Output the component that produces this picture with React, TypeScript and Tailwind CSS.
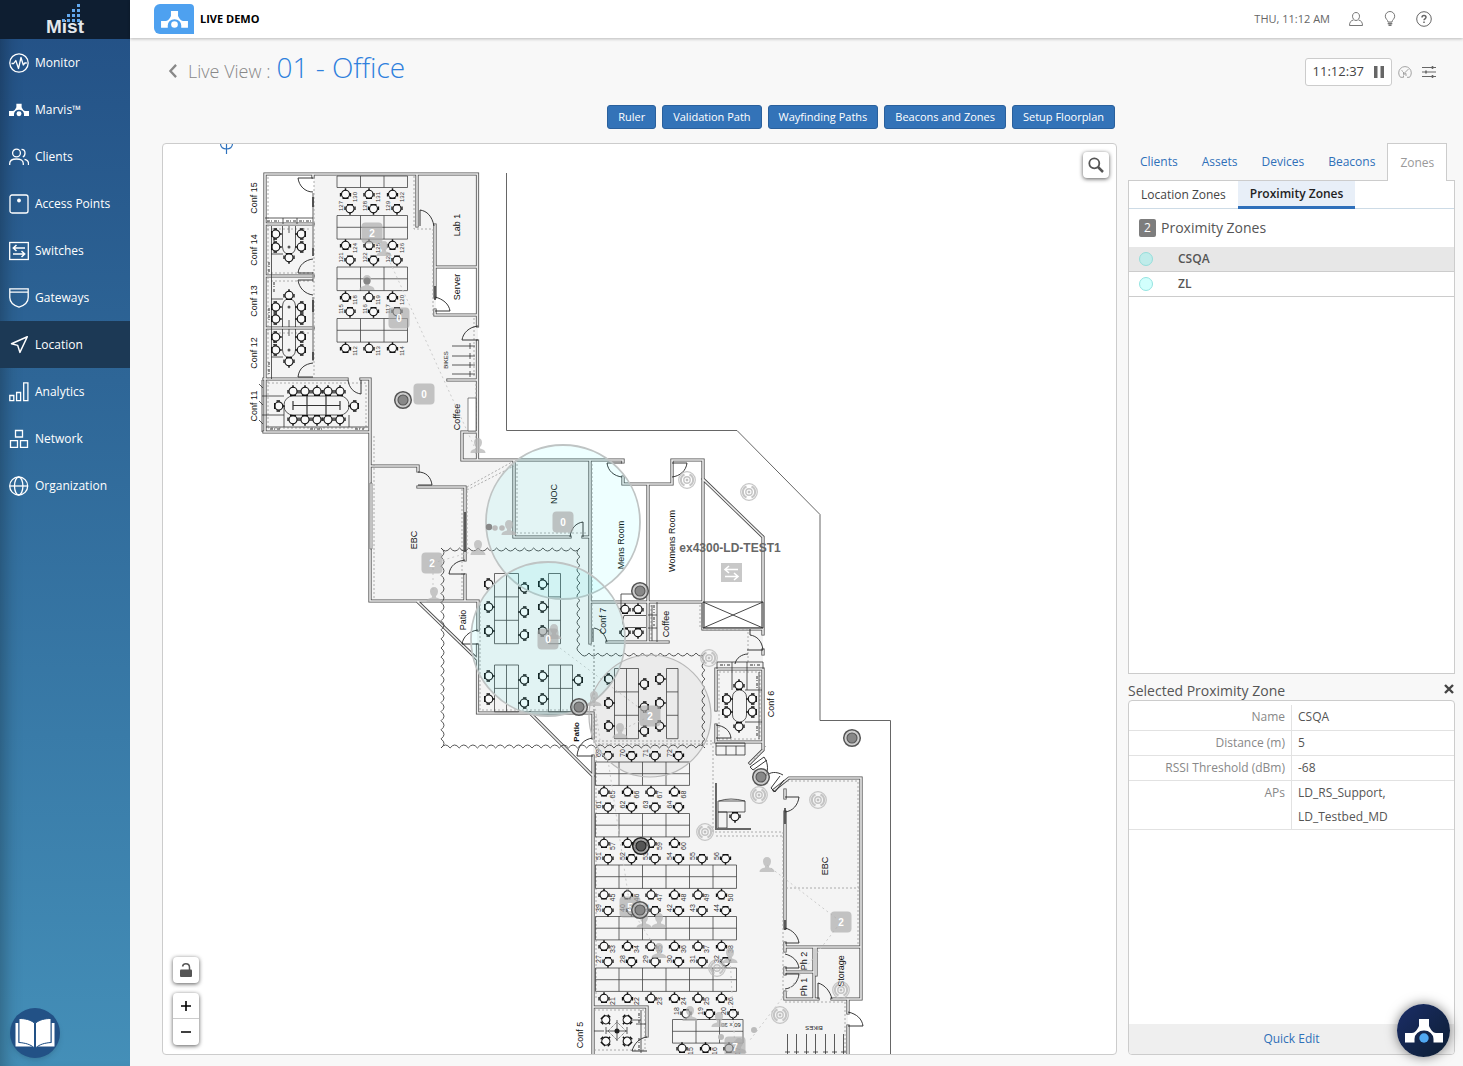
import React from "react";

type Pt = [number, number];

/* ---------- shared glyphs ---------- */

function MarvisShape({ dot = "currentColor", className = "" }: { dot?: string; className?: string }) {
  return (
    <svg viewBox="0 0 38 24" className={className} aria-hidden="true">
      <path
        fill="currentColor"
        d="M14 0h10v7c2 4 4 7 7 7h7v9.5H28.5V20a9.5 8.5 0 0 0-19 0v3.5H0V14h7c3 0 5-3 7-7z"
      />
      <circle cx="19" cy="19" r="4.7" fill={dot} />
    </svg>
  );
}

const stroke = { fill: "none", stroke: "currentColor", strokeWidth: 1.3 } as const;

const navIcons: Record<string, React.ReactNode> = {
  Monitor: (
    <g {...stroke}>
      <circle cx="10" cy="10" r="9.2" />
      <path d="M2.5 10.5h2.2l2.1-3 2.7 8L12 4.5l2.3 7.5 1.5-2h2" strokeLinejoin="round" />
    </g>
  ),
  Clients: (
    <g {...stroke}>
      <circle cx="7.5" cy="6" r="3.9" />
      <path d="M.7 18v-1.500c0-3.300 2.700-4.500 6.800-4.500s6.800 1.200 6.800 4.500V18M12.500 2.300c2 0 3.500 1.500 3.500 3.700s-1 3.500-2.200 4M15.500 12.300c2.800.5 4 2 4 4.200V18" />
    </g>
  ),
  "Access Points": (
    <g {...stroke}>
      <rect x="1" y="1" width="18" height="18" rx="2" />
      <circle cx="10" cy="6.500" r="1.900" fill="currentColor" stroke="none" />
    </g>
  ),
  Switches: (
    <g {...stroke}>
      <rect x=".7" y="1.500" width="18.600" height="17" />
      <path d="M16 7H4.500M7.500 4L4.300 7l3.200 3M4 13h11.500M12.500 10l3.200 3-3.200 3" strokeWidth="1.500" />
    </g>
  ),
  Gateways: (
    <g {...stroke}>
      <path d="M.8.8h18.400v8.700c0 5-4 8-9.200 9.700C4.800 17.500.8 14.500.8 9.500zM.8 4.200h18.400" />
    </g>
  ),
  Location: <path {...stroke} strokeWidth={1.5} d="M18.300 1.700L2.500 8.700l6.200 1.700 2.200 7z" strokeLinejoin="round" />,
  Analytics: (
    <g {...stroke}>
      <path d="M.8 13.500h4v5.200h-4zM7.600 10.500h4v8.200h-4zM14.700.8h4.200v17.900h-4.200z" />
    </g>
  ),
  Network: (
    <g {...stroke}>
      <path d="M6.500 1.500h7v6.500h-7zM1.500 11.700h7v6.700h-7zM11.500 11.700h7v6.700h-7z" />
    </g>
  ),
  Organization: (
    <g {...stroke}>
      <circle cx="9.700" cy="10" r="9" />
      <ellipse cx="9.700" cy="10" rx="4.200" ry="9" />
      <path d="M.7 10h18" />
    </g>
  ),
};

const navItems = [
  "Monitor",
  "Marvis™",
  "Clients",
  "Access Points",
  "Switches",
  "Gateways",
  "Location",
  "Analytics",
  "Network",
  "Organization",
];

function Sidebar() {
  return (
    <nav className="relative flex w-[130px] shrink-0 flex-col bg-linear-to-b from-[#235085] to-[#448fb8] shadow-[inset_18px_0_18px_-14px_rgba(0,0,0,0.3)]">
      <a href="#home" className="flex h-[39px] items-end justify-center bg-[#0e1e31]" aria-label="Mist home">
        <span className="relative flex h-full items-end font-['Liberation_Sans',Arial,sans-serif] text-[19px] leading-6 font-bold text-[#e3e7ec]">
          Mist
          <svg viewBox="0 0 18 18" className="absolute top-1 right-1 h-[18px] w-[18px] fill-[#62a8ee]" aria-hidden="true">
            {[0, 1, 2, 3].map((c) =>
              Array.from({ length: c + 1 }, (_, r) => <rect key={`${c}${r}`} x={c * 5} y={15 - r * 5} width="3" height="3" />)
            )}
          </svg>
        </span>
      </a>
      <ul>
        {navItems.map((n) => (
          <li key={n}>
            <a
              href={`#${n}`}
              className={`flex h-[47px] items-center gap-[6px] pt-px pl-[9px] text-xs font-medium text-white ${
                n === "Location" ? "bg-[#1c3955]" : ""
              }`}
            >
              {n === "Marvis™" ? (
                <MarvisShape className="h-4 w-5 shrink-0" />
              ) : (
                <svg viewBox="0 0 20 20" className="h-5 w-5 shrink-0" aria-hidden="true">
                  {navIcons[n]}
                </svg>
              )}
              {n}
            </a>
          </li>
        ))}
      </ul>
      <button
        aria-label="Documentation"
        className="mt-auto mb-2 ml-[10px] flex h-[50px] w-[50px] items-center justify-center rounded-full bg-[#225186] shadow-md"
      >
        <svg viewBox="0 0 40 32" className="h-8 w-10" aria-hidden="true">
          <path d="M.5 6h3v20c5 0 11 0 15.500 3.500H.500zM39.500 6h-3v20c-5 0-11 0-15.500 3.500h18.500z" fill="#fff" />
          <path d="M4 1.500c6 0 11 1 15.500 4.500v25C15 27 10 26 4 25.500zM36 1.500c-6 0-11 1-15.500 4.500v25C25 27 30 26 36 25.500z" fill="#fff" stroke="#225186" strokeWidth="1" />
        </svg>
      </button>
    </nav>
  );
}

function Header() {
  return (
    <header className="relative flex h-[38px] shrink-0 items-center bg-white pr-[31px] pl-6 shadow-[0_1px_3px_rgba(0,0,0,0.25)]">
      <div className="flex h-[30px] w-10 items-center justify-center rounded-l-md rounded-tr-sm bg-[#4ea1f0] text-white">
        <MarvisShape className="h-[17px] w-[27px]" />
      </div>
      <span className="ml-[6px] text-[11px] font-bold text-black">LIVE DEMO</span>
      <span className="ml-auto text-[11px] text-[#666]">THU, 11:12 AM</span>
      <button aria-label="Account" className="ml-[18px] text-[#777]">
        <svg viewBox="0 0 16 16" className="h-4 w-4" fill="none" stroke="currentColor">
          <path d="M8 1.500c2 0 3.500 1.500 3.500 3.700S10 9.500 8 9.500 4.500 7.400 4.500 5.200 6 1.500 8 1.500zM5.500 9C3 9.500 1.500 11 1.500 14.500h13C14.500 11 13 9.500 10.500 9" />
        </svg>
      </button>
      <button aria-label="What's new" className="ml-[18px] text-[#777]">
        <svg viewBox="0 0 16 16" className="h-4 w-4" fill="none" stroke="currentColor">
          <path d="M6 11C6 9 3.300 8 3.300 5.200a4.700 4.700 0 0 1 9.400 0C12.700 8 10 9 10 11z" />
          <path d="M5.700 12.500h4.600M6.500 14.300h3" strokeWidth="1.500" />
        </svg>
      </button>
      <button aria-label="Help" className="ml-[18px] text-[#666]">
        <svg viewBox="0 0 16 16" className="h-4 w-4" fill="none" stroke="currentColor">
          <circle cx="8" cy="8" r="7.300" />
          <path d="M6 6.500C6 5.200 6.800 4.500 8 4.500s2 .7 2 1.800c0 1.500-2 1.500-2 3M8 10.500V12" strokeWidth="1.500" />
        </svg>
      </button>
    </header>
  );
}

/* ---------- floor plan pieces ---------- */

function Chair({ x, y, r = 0 }: { x: number; y: number; r?: number }) {
  return <use href="#chair" transform={`translate(${x} ${y}) rotate(${r})`} />;
}

function Desk({ x, y, cols, rows, w, h }: { x: number; y: number; cols: number; rows: number; w: number; h: number }) {
  let d = "";
  for (let i = 0; i <= cols; i++) d += `M${x + i * w} ${y}v${rows * h}`;
  for (let j = 0; j <= rows; j++) d += `M${x} ${y + j * h}h${cols * w}`;
  return <path d={d} stroke="#444" strokeWidth="0.8" fill="none" />;
}

function Seat({ x, y, n }: { x: number; y: number; n: number }) {
  return (
    <text fontSize={n > 99 ? 6 : 7} fill="#333" textAnchor="middle" transform={`translate(${x} ${y}) rotate(-90)`}>
      {n}
    </text>
  );
}

function SeatRow({ x, y, count, from, above }: { x: number; y: number; count: number; from: number; above?: boolean }) {
  return (
    <>
      {Array.from({ length: count }, (_, i) => (
        <g key={i}>
          <Chair x={x + i * 23.5} y={y} r={above ? 180 : 0} />
          <Seat x={x + i * 23.5 + (above ? -7 : 11)} y={above ? y - 3 : y + 3} n={from + i} />
        </g>
      ))}
    </>
  );
}

function scallop(points: Pt[]) {
  let d = `M${points[0][0]} ${points[0][1]}`;
  for (let i = 1; i < points.length; i++) {
    const [ax, ay] = points[i - 1];
    const [bx, by] = points[i];
    const len = Math.hypot(bx - ax, by - ay);
    const n = Math.max(1, Math.round(len / 9));
    const dx = (bx - ax) / n;
    const dy = (by - ay) / n;
    const ux = (bx - ax) / len;
    const uy = (by - ay) / len;
    for (let k = 0; k < n; k++) d += `q${dx / 2 - uy * 6} ${dy / 2 + ux * 6} ${dx} ${dy}`;
  }
  return d;
}

const floor =
  "M265 225H314V175H478V460H590V602H703V629H763V742V752L750 764L776 790L788 778H861V1000H848V1060H593V713H477V601H370V431H265Z";

const walls =
  "M265 432V174H477.500V326M477.500 341V460M462 432V460H623V462M462 432H477M265 224H313M265 276H313M265 328H313M264 379H347M361 379H370V466M264 432H370" +
  "M313 174V177M417 174V226M435 225V297M435 310V315H477M435 267H477M448 380H477" +
  "M370 431V601H478V630M370 466H418V471M418 487H465V560M465 575V601M477.500 645V713H593V738M593 756V1060" +
  "M514 461V537H570M583 537H590M590 460V643M648 484V642M590 602H703M623 477V484H672V460H703V629H763V634M703 479L763 537V629" +
  "M607 642H668M418 602L477 659M530 713L593 776M763 650V654M716 669H763V742H716V725M716 710V669M763 742V750L750 763" +
  "M774 790L789 778H861V947M785 790V798M785 812V928M785 943V951M785 947H861V999H832M785 968V974M785 972H814M814 947V998M816 947V975M818 999H785V992M848 999V1013M848 1026V1060" +
  "M593 1007H647V1036";

/* partitions drawn as one grey line */
const partitions = "M313 193V248M313 272V282M313 297V361";

const dashes =
  "M314 177V378M414 176V229H433V315M474 318V378M476 384V456M268 383H366V428H268M268 177V428M374 436V598M462 489V598M467 487L512 462M467 490L514 466M467 487V548M517 464V533H588M592 464V640M594 645V745M590 645H594V713M702 630H748V662M598 744H714M598 741H714M713 742V832H783V1000M716 836H783M786 888H859M787 781H858V944M766 746L753 760M480 604V710H590M596 716V1000M845 1002V1055M594 1010H645V1050H594M719 672H760V739H719ZM785 1002H845M651 605V640M700 605V628M267 229H311M267 273H311M267 281H311M267 333H311";

const doors =
  "M313 178H298C299 186 305 192 313 192M313 259C305 260 299 265 298 273H313M313 280H298C299 288 305 294 313 295M313 363C305 364 299 368 298 377H313" +
  "M361 380V394C354 393 349 388 348 380M420 226V210C427 211 432 216 434 226M435 297C443 299 449 304 450 311H435M478 326C469 327 463 333 462 340H478" +
  "M418 472C426 472 431 477 432 485H418M465 560C456 561 450 566 449 574H465M478 630C469 631 463 637 462 644H478M583 537V522C576 523 571 528 570 537" +
  "M607 463H622M607 463C608 471 614 476 622 477M672 463H687C686 471 680 476 672 477M593 628V642M594 628C600 629 605 634 607 642M750 629V635C757 636 762 641 763 650H747M735 664C736 658 742 654 748 654" +
  "M716 725C724 726 730 730 731 738H716M785 797H799C798 805 793 811 785 812M785 928C793 930 798 936 799 943H785M785 954C793 956 798 961 799 968H785M785 974H799C798 982 793 988 785 989" +
  "M818 999V983C825 985 830 991 832 999M848 1012C857 1014 862 1019 863 1026H848M593 738C584 739 578 745 577 756H593M632 1051C634 1044 639 1038 647 1037M632 1051H647M764 757L750 767L753 770L767 760M764 757C769 764 768 772 765 777M780 776L771 788L775 792L784 780M783 775C776 771 770 772 766 776";

const rooms: [string, number, number][] = [
  ["Conf 15", 257, 198],
  ["Conf 14", 257, 250],
  ["Conf 13", 257, 301],
  ["Conf 12", 257, 353],
  ["Conf 11", 257, 406],
  ["Lab 1", 460, 225],
  ["Server", 460, 287],
  ["Coffee", 460, 417],
  ["EBC", 417, 540],
  ["NOC", 557, 494],
  ["Mens Room", 624, 545],
  ["Womens Room", 675, 541],
  ["Patio", 466, 620],
  ["Conf 7", 606, 621],
  ["Coffee", 669, 624],
  ["Conf 6", 774, 704],
  ["EBC", 828, 866],
  ["Ph 2", 807, 961],
  ["Ph 1", 807, 987],
  ["Storage", 844, 971],
  ["Conf 5", 583, 1035],
];

const tableChairs: [number, number, number][] = [
  [276, 234, 270], [276, 247, 270], [301, 234, 90], [301, 247, 90], [289, 258, 0],
  [289, 295, 180], [276, 307, 270], [276, 319, 270], [301, 307, 90], [301, 319, 90],
  [276, 337, 270], [276, 350, 270], [301, 337, 90], [301, 350, 90], [289, 362, 0],
  [279, 406, 270], [354, 406, 90],
  ...[293, 305, 317, 328, 340].flatMap((x): [number, number, number][] => [[x, 391, 180], [x, 420, 0]]),
  [739, 685, 180], [727, 699, 270], [727, 712, 270], [752, 699, 90], [752, 712, 90], [739, 727, 0],
  [625, 609, 180], [638, 609, 180], [625, 633, 0], [638, 633, 0],
  [606, 1020, 315], [627, 1020, 45], [606, 1041, 225], [627, 1041, 135], [735, 817, 0],
];

const leftSeats: Pt[] = [
  ...[489, 543].flatMap((x) => [584, 607, 631, 676, 699].map((y): Pt => [x, y])),
  ...[609, 660].flatMap((x) => [679, 703, 726].map((y): Pt => [x, y])),
];
const rightSeats: Pt[] = [
  ...[588, 612, 635, 680, 703].map((y): Pt => [524, y]),
  [578, 680],
  ...[684, 707, 731].map((y): Pt => [644, y]),
];

const accessPoints: [number, number, boolean?][] = [
  [403, 400], [640, 591], [579, 707], [852, 738], [761, 777], [641, 846, true], [640, 910],
];
const beacons: Pt[] = [
  [687, 480], [749, 492], [709, 658], [759, 795], [818, 800], [705, 832], [717, 968], [841, 990], [780, 1015],
];
const people: Pt[] = [
  [367, 283], [384, 249], [478, 446], [478, 548], [509, 528], [434, 595], [594, 699], [620, 731], [767, 865],
  [644, 921], [659, 921], [659, 951], [730, 956], [690, 1014], [719, 1020], [554, 632], [739, 1046],
];
const badges: [number, number, string][] = [
  [372, 233, "2"], [399, 318, "0"], [424, 394, "0"], [563, 522, "0"], [432, 563, "2"],
  [548, 639, "0"], [650, 716, "2"], [841, 922, "2"], [630, 907, "5"], [735, 1047, "7"],
];

function FloorPlan() {
  return (
    <svg
      viewBox="163 144 953 911"
      preserveAspectRatio="xMinYMin slice"
      className="absolute inset-0 h-full w-full font-['Liberation_Sans',Arial,sans-serif]"
      role="img"
      aria-label="Office floor plan"
    >
      <defs>
        <g id="chair">
          <circle cy="0.2" r="4" fill="#fafafa" stroke="#111" strokeWidth="1.100" />
          <path d="M-5-1V2.500M5-1V2.500M-3 4.300H3" stroke="#111" strokeWidth="1.300" />
          <path d="M0-3.500V-5.800" stroke="#111" strokeWidth="1.500" />
        </g>
        <g id="person" fill="#b5b5b5" fillOpacity="0.75">
          <path d="M0-8c2.500 0 4 1.700 4 4.200C4-1.500 3 0 2 1v1.500C5 3.500 7.500 4 7.500 7h-15C-7.500 4-5 3.500-2 2.500V1C-3 0-4-1.500-4-3.800-4-6.300-2.500-8 0-8z" />
        </g>
        <g id="beacon" fill="none" stroke="#bbb" strokeOpacity="0.85">
          <circle r="8.300" strokeWidth="1.200" />
          <path d="M-2.500 5.500A6 6 0 0 1-2.500-5.500M2.500-5.500A6 6 0 0 1 2.500 5.500" strokeWidth="2" />
          <circle r="3.200" strokeWidth="1.400" />
          <circle r="1" fill="#bbb" />
        </g>
      </defs>

      <path d="M226.500 144V154M220.500 144Q221 149 226.500 149T232.500 144" stroke="#2f72bd" fill="none" strokeWidth="1.200" />
      <path d={floor} fill="#f4f4f4" />
      <path d="M436 268H477V314H436Z" fill="#fff" />
      <path d="M506.500 173V430.500H737L820 514.500V720.500H890.500V1060" fill="none" stroke="#555" strokeWidth="0.900" />

      <path d={walls} fill="none" stroke="#4a4a4a" strokeWidth="3.200" strokeLinecap="square" />
      <path d={walls} fill="none" stroke="#eee" strokeWidth="1.600" strokeLinecap="square" />
      <path d={partitions} fill="none" stroke="#999" strokeWidth="1.600" />
      <path d={dashes} fill="none" stroke="#999" strokeWidth="0.800" strokeDasharray="2 2" />
      <path d={doors} fill="none" stroke="#222" strokeWidth="0.900" />
      <path d="M703 602H763V628H703ZL763 628M763 602L703 628" fill="none" stroke="#333" strokeWidth="0.900" />
      <path d="M370 483V549H372V483ZM468 398H476V431H468Z" fill="#fff" stroke="#555" strokeWidth="0.700" />

      <g fill="none" stroke="#333" strokeWidth="0.800">
        <path d="M282.500 226V247Q283 254 289 254T295.500 247V226M282.500 327V306Q283 299 289 299T295.500 306V327M282.500 329V350Q283 357 289 357T295.500 350V329" />
        <path d="M271.500 226V379M265 218H313M283 218V224M297 218V224M271 254H283M271 299H283M271 357H283M289 226V233M289 320V327M289 329V336" />
        <rect x="284" y="396" width="65" height="19" rx="9" />
        <path d="M262 396H284M262 415H284M284 406V427M349 415V427M266 427H368" />
        <path d="M293 405.500H340M293 401V410M307 396V415M326 396V415M340 401V410" strokeWidth="1.200" />
        <path d="M262 380V432M259 384L263 388M259 401L263 405M259 420L263 424" />
        <rect x="732.500" y="690" width="14" height="32" rx="7" />
        <path d="M717 662H763V669M732 662V690M747 662V690M717 662V669M759 672V739M745 690H762M745 722H762" />
        <path d="M646 615.500H624Q621 621 624 627.500H646M621 594V610M621 594H634M652 605V641M657 602V642M648 615H657M648 628H657" />
        <path d="M452 346H475M452 356H475M452 365H475M452 374H475M470 343V349M470 353V359M470 362V368M470 371V377" />
        <path d="M716 743H745V755H716ZM716 746H745M726 746V755M736 746V755M718 801H745V812H718ZM718 812H727V828H718ZM719 801Q730 797 745 801" />
        <path d="M606 1031H627M617 1020V1041M606 1027V1034M627 1027V1034M594 1031H604M641 1010V1053M627 1020H641M636 1024H646" />
        <path d="M608 1031L617 1022L626 1031L617 1040Z" strokeDasharray="1 1" />
        <path d="M787.500 1034V1055M796.500 1034V1055M806.500 1034V1055M815.500 1034V1055M825.500 1034V1055M834.500 1034V1055M843.500 1034V1055M785 1052H790M794 1052H799M804 1052H809M813 1052H818M823 1052H828M832 1052H837M841 1052H846" />
      </g>
      <path d="M716 783V829H751" fill="none" stroke="#666" strokeWidth="2" />
      <g stroke="#333" strokeWidth="1" strokeDasharray="3 1 1 2" fill="none">
        <path d="M267 221H280M286 221H296M299 221H311M274 231V250M269 262V272M274 282V292M269 308V320M274 333V347M269 362V374M270 429H280M310 429H323M355 429H364M720 665H730M750 665H760M757 676V688M757 726V736M654 605V613M654 617V626M639 1013V1024M639 1038V1050" />
      </g>
      <path d="M313 197V207M313 248V256M313 300V312M313 352V360M435 286V300M465 512V552M785 808V824M785 920V930" stroke="#333" strokeWidth="1.500" />
      <circle cx="617" cy="1031" r="2.500" fill="#222" />
      <circle cx="289" cy="247" r="1.500" fill="#555" />
      <circle cx="289" cy="307" r="1.500" fill="#555" />
      <circle cx="289" cy="350" r="1.500" fill="#555" />

      <Desk x={337} y={176} cols={3} rows={1} w={23.5} h={11.5} />
      {[215.5, 267, 318.5].map((y) => (
        <Desk key={y} x={337} y={y} cols={3} rows={2} w={23.5} h={11.8} />
      ))}
      <SeatRow x={345.5} y={194} count={3} from={130} />
      <SeatRow x={350} y={209} count={3} from={127} above />
      <SeatRow x={345.5} y={245} count={3} from={124} />
      <SeatRow x={350} y={260.5} count={3} from={121} above />
      <SeatRow x={345.5} y={297} count={3} from={118} />
      <SeatRow x={350} y={312} count={3} from={115} above />
      <SeatRow x={345.5} y={348} count={3} from={112} />

      {[762, 813.5].map((y) => (
        <Desk key={y} x={595.5} y={y} cols={4} rows={2} w={23.5} h={11.7} />
      ))}
      {[865, 916.5, 968].map((y) => (
        <Desk key={y} x={595.5} y={y} cols={6} rows={2} w={23.5} h={11.7} />
      ))}
      <SeatRow x={608} y={756} count={4} from={69} above />
      <SeatRow x={604} y={791.5} count={4} from={65} />
      <SeatRow x={608} y={807.5} count={4} from={61} above />
      <SeatRow x={604} y={843} count={4} from={57} />
      <SeatRow x={608} y={859} count={6} from={51} above />
      <SeatRow x={604} y={894.5} count={6} from={45} />
      <SeatRow x={608} y={911} count={6} from={39} above />
      <SeatRow x={604} y={946} count={6} from={33} />
      <SeatRow x={608} y={962} count={6} from={27} above />
      <SeatRow x={604} y={998} count={6} from={21} />
      <Desk x={672.5} y={1019.5} cols={3} rows={2} w={23.5} h={11.8} />
      <SeatRow x={686} y={1014} count={3} from={18} above />
      <SeatRow x={682} y={1048} count={3} from={15} />

      <Desk x={494.5} y={573.5} cols={2} rows={3} w={12} h={23.4} />
      <Desk x={548.5} y={573.5} cols={1} rows={3} w={12} h={23.4} />
      <Desk x={494.5} y={665} cols={2} rows={2} w={12} h={23.4} />
      <Desk x={548.5} y={665} cols={2} rows={2} w={12} h={23.4} />
      <Desk x={614.5} y={668.5} cols={2} rows={3} w={12} h={23.4} />
      <Desk x={666.5} y={668.5} cols={1} rows={3} w={11.5} h={23.4} />
      {leftSeats.map(([x, y]) => (
        <Chair key={`l${x}-${y}`} x={x} y={y} r={90} />
      ))}
      {rightSeats.map(([x, y]) => (
        <Chair key={`r${x}-${y}`} x={x} y={y} r={270} />
      ))}
      {tableChairs.map(([x, y, r]) => (
        <Chair key={`t${x}-${y}`} x={x} y={y} r={r + 180} />
      ))}

      <path
        d={scallop([[441, 548], [580, 548], [580, 653], [705, 653], [705, 748], [441, 748], [441, 548]])}
        fill="none"
        stroke="#444"
        strokeWidth="0.900"
      />

      {rooms.map(([label, x, y]) => (
        <text key={`${label}${y}`} fontSize="9" fill="#111" textAnchor="middle" transform={`translate(${x} ${y}) rotate(-90)`}>
          {label}
        </text>
      ))}
      <text fontSize="8" fontWeight="700" fill="#111" textAnchor="middle" transform="translate(579 732) rotate(-90)">
        Patio
      </text>
      <text fontSize="6" fill="#222" textAnchor="middle" transform="translate(448 360) rotate(-90)">
        BIKES
      </text>
      <text fontSize="6" fill="#222" textAnchor="middle" transform="translate(814 1026) rotate(180)">
        BIKES
      </text>
      <text fontSize="6" fill="#222" textAnchor="middle" transform="translate(731 1023) rotate(180)">
        60 x 30
      </text>

      <path
        d="M384 249L474 446M433 563L478 550M433 563V590M560 648L650 716M594 699L600 740M620 731L650 716M767 865L841 922L750 1040M608 760L630 907L660 955M730 956L735 1050"
        fill="none"
        stroke="#ccc"
        strokeDasharray="2 3"
      />

      <circle cx="563" cy="522" r="77" fill="#00ffff" fillOpacity="0.065" stroke="#bfc4c4" strokeWidth="1.800" />
      <circle cx="548" cy="639" r="77" fill="#00f0f0" fillOpacity="0.075" stroke="#bfc4c4" strokeWidth="1.800" />
      <circle cx="650" cy="716" r="61" fill="#000" fillOpacity="0.035" stroke="#b8b8b8" strokeWidth="1.200" />

      {beacons.map(([x, y]) => (
        <use key={`${x}-${y}`} href="#beacon" x={x} y={y} />
      ))}
      {people.map(([x, y]) => (
        <use key={`${x}-${y}`} href="#person" x={x} y={y} />
      ))}
      <g fill="#888">
        <circle cx="367" cy="281" r="3.500" />
        <circle cx="489" cy="527" r="3.200" />
        <g fill="#bbb">
          <circle cx="495" cy="528" r="2.800" />
          <circle cx="502" cy="528" r="2.800" />
          <circle cx="754" cy="1030" r="3" />
          <circle cx="721" cy="1037" r="3" />
        </g>
      </g>
      {badges.map(([x, y, n]) => (
        <g key={`${x}-${y}`}>
          <rect x={x - 10.5} y={y - 10.5} width="21" height="21" rx="4" fill="#a8a8a8" fillOpacity="0.650" />
          <text x={x} y={y + 4} fontSize="10" fontWeight="700" fill="#fff" textAnchor="middle">
            {n}
          </text>
        </g>
      ))}
      {accessPoints.map(([x, y, dark]) => (
        <g key={`${x}-${y}`} stroke={dark ? "#222" : "#555"}>
          <circle cx={x} cy={y} r="8.300" fill={dark ? "#888" : "#bbb"} fillOpacity="0.700" strokeWidth="1.500" />
          <circle cx={x} cy={y} r="5" fill={dark ? "#555" : "#888"} strokeWidth="1.100" />
        </g>
      ))}
      <rect x="721" y="563" width="21" height="19" fill="#c8c8c8" />
      <path d="M738 569.500H726M729 566L725 569.500L729 573M725 576.500H737M734 573L738 576.500L734 580" fill="none" stroke="#fff" strokeWidth="1.600" />
      <text x="730" y="552" fontSize="12" fontWeight="700" fill="#666" textAnchor="middle">
        ex4300-LD-TEST1
      </text>
    </svg>
  );
}

const mapButton =
  "flex h-[26px] w-[26px] items-center justify-center rounded bg-white text-[#555] shadow-[0_1px_4px_rgba(0,0,0,0.65)]";

function MapCard() {
  return (
    <section className="relative min-h-[600px] flex-1 overflow-hidden rounded-sm border border-[#ccc] bg-white">
      <FloorPlan />
      <button aria-label="Search map" className={`absolute top-2 right-[7px] ${mapButton}`}>
        <svg viewBox="0 0 16 16" className="h-4 w-4" fill="none" stroke="currentColor">
          <circle cx="6.300" cy="6.300" r="5" strokeWidth="1.800" />
          <path d="M10 10L15 15" strokeWidth="2.500" />
        </svg>
      </button>
      <div className="absolute bottom-[9px] left-[10px] flex flex-col gap-[10px]">
        <button aria-label="Unlock map" className={mapButton}>
          <svg viewBox="0 0 14 16" className="h-4 w-[14px]" fill="currentColor">
            <rect x="1" y="7.500" width="12" height="7.500" rx="1" />
            <path d="M3.500 4.500C4 2.500 5 1.800 6.800 1.800c2.200 0 3.700 1.500 3.700 3.700v2.500" fill="none" stroke="currentColor" strokeWidth="1.500" />
          </svg>
        </button>
        <div className="flex w-[26px] flex-col divide-y divide-[#ccc] rounded bg-white text-black shadow-[0_1px_4px_rgba(0,0,0,0.65)]">
          {["Zoom in", "Zoom out"].map((z, i) => (
            <button key={z} aria-label={z} className="flex h-[26px] items-center justify-center">
              <svg viewBox="0 0 12 12" className="h-3 w-3" stroke="currentColor" strokeWidth="1.600">
                <path d={i ? "M1 6H11" : "M1 6H11M6 1V11"} />
              </svg>
            </button>
          ))}
        </div>
      </div>
    </section>
  );
}

const details = [
  ["Name", "CSQA"],
  ["Distance (m)", "5"],
  ["RSSI Threshold (dBm)", "-68"],
];

function SidePanel() {
  return (
    <aside className="flex w-[327px] shrink-0 flex-col text-xs">
      <div role="tablist" className="flex h-[37px] items-stretch text-[#2f70b8]">
        {["Clients", "Assets", "Devices", "Beacons"].map((t) => (
          <button key={t} role="tab" className="px-3">
            {t}
          </button>
        ))}
        <button
          role="tab"
          aria-selected="true"
          className="relative -mb-px ml-auto mr-2 border border-b-0 border-[#ccc] bg-white px-3 text-[#999]"
        >
          Zones
        </button>
      </div>
      <div className="flex-1 border border-[#ccc] bg-white">
        <div role="tablist" className="flex h-7 border-b border-[#cddbe6]">
          <button role="tab" className="px-3 text-[#444]">
            Location Zones
          </button>
          <button role="tab" aria-selected="true" className="-mb-px border-b-3 border-[#2f70bb] bg-[#e8eff8] px-3 font-semibold text-[#222]">
            Proximity Zones
          </button>
        </div>
        <h2 className="flex h-[38px] items-center gap-[5px] pl-[10px] text-sm text-[#555]">
          <span className="flex h-[18px] w-[17px] items-center justify-center rounded-xs bg-[#7d7d7d] text-xs text-white">2</span>
          Proximity Zones
        </h2>
        <ul className="font-semibold text-[#555]">
          <li className="flex h-[25px] items-center gap-[25px] border-b border-[#ccc] bg-[#e7e7e7] pl-[10px]">
            <span className="h-[14px] w-[14px] rounded-full border border-[#95dedb] bg-[#bfecea]" />
            CSQA
          </li>
          <li className="flex h-[25px] items-center gap-[25px] border-b border-[#ccc] pl-[10px]">
            <span className="h-[14px] w-[14px] rounded-full border border-[#95e4e1] bg-[#d2fffd]" />
            ZL
          </li>
        </ul>
      </div>
      <div className="flex h-[26px] items-end justify-between text-[#555]">
        <h2 className="text-sm leading-[18px]">Selected Proximity Zone</h2>
        <button aria-label="Close" className="mb-[6px]">
          <svg viewBox="0 0 10 10" className="mr-px h-[10px] w-[10px]" stroke="#444" strokeWidth="2.400">
            <path d="M1 1L9 9M9 1L1 9" />
          </svg>
        </button>
      </div>
      <div className="flex h-[355px] flex-col overflow-hidden rounded-sm border border-[#ccc] bg-white pt-1">
        <table className="w-full border-collapse text-[#555]">
          <tbody>
            {details.map(([k, v]) => (
              <tr key={k} className="h-[25px] border-b border-[#e2e2e2]">
                <th scope="row" className="w-1/2 border-r border-[#e2e2e2] pr-[6px] text-right font-normal text-[#888]">
                  {k}
                </th>
                <td className="pl-[6px]">{v}</td>
              </tr>
            ))}
            <tr className="border-b border-[#e2e2e2] align-top leading-6">
              <th scope="row" className="border-r border-[#e2e2e2] pr-[6px] text-right font-normal text-[#888]">
                APs
              </th>
              <td className="pl-[6px]">
                LD_RS_Support,
                <br />
                LD_Testbed_MD
              </td>
            </tr>
          </tbody>
        </table>
        <button className="mt-auto h-[30px] bg-[#efefef] text-[#2f70b8]">Quick Edit</button>
      </div>
    </aside>
  );
}

export default function App() {
  return (
    <div className="flex min-h-screen bg-[#f8f8f8] font-['Open_Sans','Noto_Sans',sans-serif]">
      <Sidebar />
      <div className="flex min-w-0 flex-1 flex-col">
        <Header />
        <main className="flex flex-1 flex-col pr-2 pb-[11px] pl-8">
          <div className="flex h-[67px] items-center">
            <h1 className="flex items-baseline gap-[6px] pb-[10px] font-light">
              <a href="#back" aria-label="Back" className="mr-1 ml-[6px]">
                <svg viewBox="0 0 10 16" className="h-[14px] w-[10px]" fill="none" stroke="#888" strokeWidth="2.600">
                  <path d="M8.500 1L2 8L8.500 15" />
                </svg>
              </a>
              <span className="text-lg text-[#888]">Live View :</span>
              <span className="text-[28px] leading-10 text-[#2f80dd]">01 - Office</span>
            </h1>
            <div className="ml-auto flex items-center gap-[6px] pr-[19px]">
              <button className="flex h-7 items-center gap-[10px] rounded-[3px] border border-[#ccc] bg-white px-[7px] text-[13px] text-[#444]">
                11:12:37
                <svg viewBox="0 0 10 12" className="h-3 w-[10px]" fill="#666" aria-label="Pause">
                  <path d="M0 0H3.500V12H0zM6.500 0H10V12H6.500z" />
                </svg>
              </button>
              <button aria-label="Performance" className="text-[#999]">
                <svg viewBox="0 0 14 14" className="h-[14px] w-[14px]" fill="none" stroke="currentColor">
                  <path
                    d="M2.500 12.300A6.300 6.300 0 1 1 11.500 12.300M2.500 12.300H5.500V10.500M11.500 12.300H9M5.500 9L10.500 4M5.500 7V9.500L8 8.500V11M3.500 5.500L5 6.500"
                    strokeWidth=".9"
                  />
                </svg>
              </button>
              <button aria-label="Display settings" className="ml-1 text-[#666]">
                <svg viewBox="0 0 14 12" className="h-3 w-[14px]" fill="none" stroke="currentColor">
                  <path d="M0 1.500H14M0 6H14M0 10.500H14" />
                  <path d="M10.500 0V3M4 4.500V7.500M10.500 9V12" strokeWidth="1.600" />
                </svg>
              </button>
            </div>
          </div>
          <div className="flex flex-1 gap-[11px]">
            <div className="flex min-w-0 flex-1 flex-col">
              <div className="flex h-[38px] items-start justify-end gap-[6px] pr-[2px]">
                {["Ruler", "Validation Path", "Wayfinding Paths", "Beacons and Zones", "Setup Floorplan"].map((b) => (
                  <button
                    key={b}
                    className="h-6 rounded-[3px] border border-[#2a609c] bg-[#3373b8] px-[10px] text-[11px] font-medium text-white"
                  >
                    {b}
                  </button>
                ))}
              </div>
              <MapCard />
            </div>
            <div className="flex flex-col pt-[38px]">
              <div className="flex flex-1">
                <SidePanel />
              </div>
            </div>
          </div>
        </main>
      </div>
      <button
        aria-label="Marvis assistant"
        className="fixed right-[13px] bottom-[9px] flex h-[53px] w-[53px] items-center justify-center rounded-full bg-linear-to-br from-[#1b2d68] to-[#0d1e33] text-white shadow-[0_0_12px_rgba(0,0,0,0.5)]"
      >
        <MarvisShape dot="#50a8f2" className="h-6 w-[38px]" />
      </button>
    </div>
  );
}
